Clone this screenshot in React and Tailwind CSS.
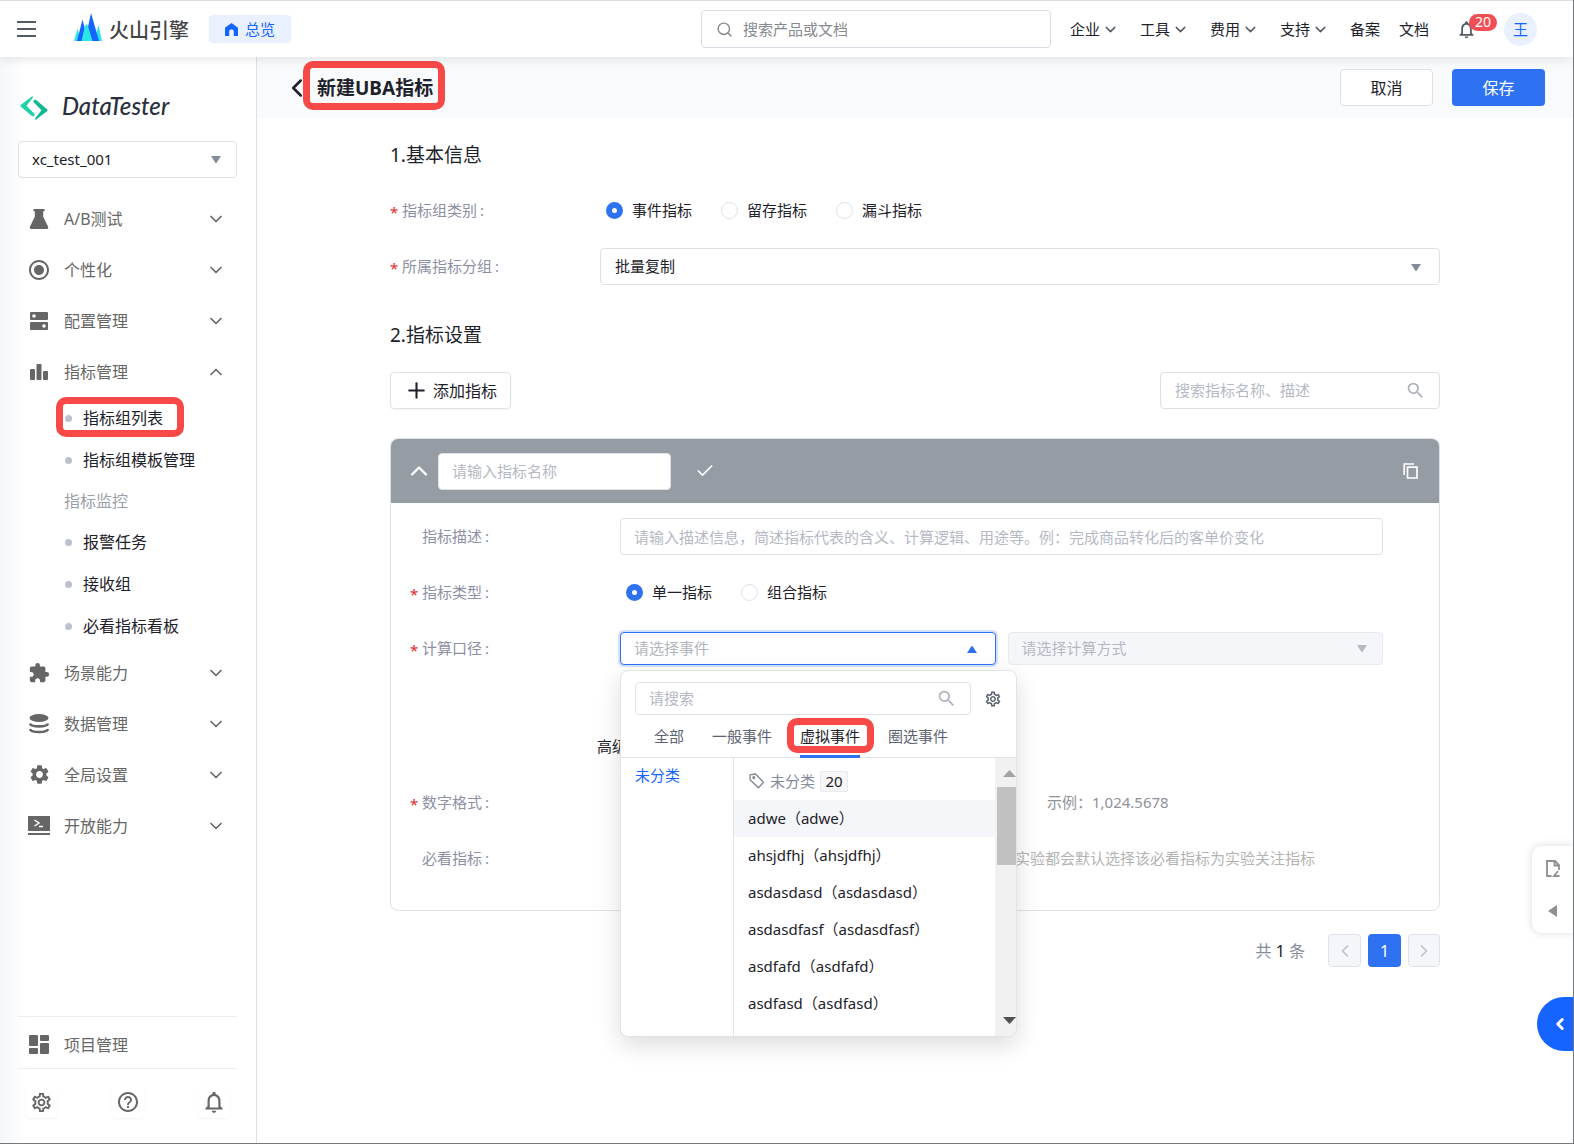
import { useState } from 'react';
import { ChevronDown, ChevronLeft, ChevronRight, ChevronUp, Check, Plus, Search } from 'lucide-react';
import {
  MdRadioButtonChecked,
  MdExtension,
  MdSettings,
  MdOutlineSettings,
  MdHelpOutline,
  MdNotificationsNone,
  MdSearch,
} from 'react-icons/md';

const FlaskIcon = () => (
  <svg width="20" height="20" viewBox="0 0 20 20" fill="currentColor">
    <path d="M4.500 0h11v2.200h-1.300v5.600L19 17.500c.6 1.300 0 2.500-1.300 2.500H2.300C1 20 .4 18.800 1 17.500l4.800-9.700V2.200H4.500z" />
  </svg>
);

const ServerIcon = () => (
  <svg width="18" height="18" viewBox="0 0 18 18">
    <rect width="18" height="8" rx="1" fill="currentColor" />
    <rect y="10" width="18" height="8" rx="1" fill="currentColor" />
    <circle cx="4" cy="4" r="1.800" fill="#fff" />
    <circle cx="14" cy="14" r="1.800" fill="#fff" />
  </svg>
);

const BarsIcon = () => (
  <svg width="18" height="18" viewBox="0 0 18 18" fill="currentColor">
    <rect y="6" width="5" height="11" rx="1" />
    <rect x="6.500" y="1" width="5" height="16" rx="1" />
    <rect x="13" y="8" width="5" height="9" rx="1" />
  </svg>
);

const DatabaseIcon = () => (
  <svg width="20" height="20" viewBox="0 0 20 20">
    <ellipse cx="10" cy="4" rx="9.500" ry="4" fill="currentColor" />
    <path d="M1 9.500c1 3.800 17 3.800 18 0M1 15c1 4 17 4 18 0" fill="none" stroke="currentColor" strokeWidth="2.600" />
  </svg>
);

const TerminalIcon = () => (
  <svg width="22" height="20" viewBox="0 0 22 20">
    <path d="M0 0h22v15H0zM0 17h22v2H0z" fill="currentColor" />
    <path d="M6.500 4l4.500 3-4.500 3M11 10.500h4" fill="none" stroke="#fff" strokeWidth="1.500" />
  </svg>
);

const DashboardIcon = () => (
  <svg width="20" height="20" viewBox="0 0 20 20" fill="currentColor">
    <rect width="9" height="11" rx="1" />
    <rect y="13" width="9" height="6" rx="1" />
    <rect x="11" width="9" height="6" rx="1" />
    <rect x="11" y="8" width="9" height="11" rx="1" />
  </svg>
);

const VolcanoLogo = () => (
  <svg width="28" height="28" viewBox="0 0 28 28">
    <path d="M0 28L3.500 15.500 7 28zM20 28l4.500-16L28 28z" fill="#2be6e6" />
    <path d="M3 28L8.500 6.500 14 28z" fill="#1664ff" />
    <path d="M11 28l6-28 8 28z" fill="#1664ff" />
    <path d="M7.500 28l3.500-15c.6-2 2.400-2 3 0L18.500 28z" fill="#2be6e6" />
  </svg>
);

const TesterLogo = () => (
  <svg width="28" height="24" viewBox="0 0 28 24">
    <path d="M12.500 0L1 8.800c-.8.700-.8 1.300 0 2L11.800 20c1.600 1.300 3.800-1.200 2.300-2.600L6.500 9.800 13 1.500z" fill="#1fd0ab" />
    <path d="M15.500 24L27 15.200c.8-.7.800-1.300 0-2L16.200 4c-1.600-1.300-3.800 1.200-2.300 2.600l7.600 7.600-6.500 8.300z" fill="#10b797" />
  </svg>
);

const HomeIcon = () => (
  <svg width="13" height="13" viewBox="0 0 13 13" fill="#1664ff">
    <path d="M6.500 0L13 4.800V13H8.800V8.500c0-2.600-4.600-2.600-4.600 0V13H0V4.800z" />
  </svg>
);

const CopyIcon = () => (
  <svg width="16" height="16" viewBox="0 0 16 16" fill="none" stroke="currentColor" strokeWidth="1.700">
    <path d="M1.200 12V1H11" />
    <path d="M4.500 4.200h9.500v10.800H4.500z" />
  </svg>
);

const TagIcon = () => (
  <svg width="16" height="16" viewBox="0 0 16 16" fill="none" stroke="#7d8592" strokeWidth="1.300" strokeLinejoin="round">
    <path d="M1 1.800L6.500 1l8 8.300-5 5.500L1.200 7z" />
    <circle cx="4.800" cy="4.600" r=".9" />
  </svg>
);

const Triangle = ({ className }) => (
  <svg width="10" height="7" viewBox="0 0 10 7" fill="currentColor" className={className}>
    <path d="M0 0h10L5.800 6.400a1 1 0 0 1-1.600 0z" />
  </svg>
);

const menuTop = [
  { label: 'A/B测试', icon: <FlaskIcon /> },
  { label: '个性化', icon: <MdRadioButtonChecked size={24} /> },
  { label: '配置管理', icon: <ServerIcon /> },
  { label: '指标管理', icon: <BarsIcon />, open: true },
];

const menuBottom = [
  { label: '场景能力', icon: <MdExtension size={22} /> },
  { label: '数据管理', icon: <DatabaseIcon /> },
  { label: '全局设置', icon: <MdSettings size={23} /> },
  { label: '开放能力', icon: <TerminalIcon /> },
];

const events = ['adwe', 'ahsjdfhj', 'asdasdasd', 'asdasdfasf', 'asdfafd', 'asdfasd'];

const MenuRow = ({ label, icon, open }) => (
  <button className="flex h-[51px] w-full items-center text-[#666]">
    <span className="flex w-[42px] items-center justify-center">{icon}</span>
    <span className="ml-1 flex-1 text-left text-base">{label}</span>
    <span className="mr-[11px]">
      {open ? <ChevronUp size={20} strokeWidth={2} /> : <ChevronDown size={20} strokeWidth={2} />}
    </span>
  </button>
);

const SubItem = ({ label, marked }) => (
  <a href="#" className="relative flex h-[42px] items-center gap-[11px] pl-[47px] text-base text-[#1d2129]">
    <span className="h-[7px] w-[7px] rounded-full bg-[#bcc1d0]" />
    {label}
    {marked && <span className="absolute left-[38px] top-0 h-[40px] w-[128px] rounded-[10px] border-[7px] border-[#f74a48]" />}
  </a>
);

const Sidebar = () => (
  <aside className="flex w-[257px] shrink-0 flex-col border-r border-[#dfe1e8] bg-linear-to-r from-[#f5f7fa] to-white to-10% pl-[18px] pr-[19px]">
    <div className="mt-[37px] flex h-[28px] items-center gap-[14px] pl-[2px]">
      <TesterLogo />
      <span className="pb-1 font-['Lato',sans-serif] text-2xl font-medium italic text-[#2b3040]">DataTester</span>
    </div>
    <div className="relative mt-[19px] text-[#1d2129]">
      <select aria-label="项目" className="h-[37px] w-full appearance-none rounded border border-[#dfe1e8] bg-white px-[13px] text-[15px]">
        <option>xc_test_001</option>
      </select>
      <Triangle className="pointer-events-none absolute right-4 top-[15px] text-[#848b99]" />
    </div>
    <nav className="mt-[15px]">
      {menuTop.map((m) => <MenuRow key={m.label} {...m} />)}
      <SubItem label="指标组列表" marked />
      <SubItem label="指标组模板管理" />
      <p className="flex h-10 items-center pl-[46px] text-base text-[#999fa8]">指标监控</p>
      <SubItem label="报警任务" />
      <SubItem label="接收组" />
      <SubItem label="必看指标看板" />
      {menuBottom.map((m) => <MenuRow key={m.label} {...m} />)}
    </nav>
    <div className="mt-auto">
      <a href="#" className="flex h-[53px] items-center border-y border-[#ebedf0] pt-1 text-base text-[#666]">
        <span className="flex w-[42px] justify-center"><DashboardIcon /></span>
        <span className="ml-1">项目管理</span>
      </a>
      <div className="flex h-[74px] justify-between px-[7px] pt-[17px] text-[#666]">
        <button aria-label="设置" className="flex h-8 w-8 items-center justify-center rounded shadow-xs"><MdOutlineSettings size={23} /></button>
        <button aria-label="帮助" className="flex h-8 w-8 items-center justify-center rounded shadow-xs"><MdHelpOutline size={24} /></button>
        <button aria-label="通知" className="flex h-8 w-8 items-center justify-center rounded shadow-xs"><MdNotificationsNone size={26} /></button>
      </div>
    </div>
  </aside>
);

const Header = () => (
  <header className="relative z-10 flex h-[57px] items-center border-t border-[#dcdddf] bg-white text-[15px] text-[#1d2129] shadow-[0_2px_10px_rgba(0,0,0,0.1)]">
    <button aria-label="菜单" className="ml-[17px] flex w-[19px] flex-col gap-[5px]">
      <span className="h-[2px] bg-[#545a63]" />
      <span className="h-[2px] bg-[#545a63]" />
      <span className="h-[2px] bg-[#545a63]" />
    </button>
    <div className="ml-[38px] flex items-center gap-[7px] pb-1">
      <VolcanoLogo />
      <span className="pt-2 text-[20px] leading-7 font-medium text-[#444]">火山引擎</span>
    </div>
    <a href="#" className="ml-[20px] flex h-7 w-[82px] items-center justify-center gap-[7px] rounded bg-[#e9f0ff] text-[#1664ff]">
      <HomeIcon />
      总览
    </a>
    <div className="flex flex-1 items-center justify-end">
      <label className="flex h-[38px] w-[350px] items-center rounded border border-[#d8dde6] px-[14px] text-[#86898f]">
        <Search size={17} className="shrink-0" />
        <input className="ml-[10px] w-full bg-transparent outline-none placeholder:text-[#86898f]" placeholder="搜索产品或文档" />
      </label>
      <nav className="ml-[19px] flex items-center gap-[21px]">
        {['企业', '工具', '费用', '支持'].map((n) => (
          <button key={n} className="flex items-center gap-[2px]">
            {n}
            <ChevronDown size={17} strokeWidth={2} className="text-[#545a63]" />
          </button>
        ))}
        <div className="flex gap-[19px]">
          <a href="#">备案</a>
          <a href="#">文档</a>
        </div>
      </nav>
      <button aria-label="消息" className="relative ml-[27px] text-[#545a63]">
        <MdNotificationsNone size={21} />
        <span className="absolute -top-[5px] left-[13px] flex h-[17px] w-[28px] items-center justify-center rounded-full bg-[#f24f55] text-sm text-white">20</span>
      </button>
      <span className="ml-[27px] mr-[36px] flex h-[33px] w-[33px] items-center justify-center rounded-full bg-[#e9f0ff] text-[#1664ff]">王</span>
    </div>
  </header>
);

const Row = ({ label, required, htmlFor, children }) => (
  <div className="grid min-h-[37px] grid-cols-[210px_1fr] items-center">
    <label htmlFor={htmlFor} className="flex items-center text-[#8d90a5]">
      <span className="w-3 pt-1 text-[#e02b2b]">{required && '*'}</span>
      {label}
      <span className="ml-[3px]">:</span>
    </label>
    {children}
  </div>
);

const Radios = ({ name, options }) => {
  const [value, setValue] = useState(options[0]);
  return (
    <div className="flex items-center pl-[6px]">
      {options.map((o) => (
        <label key={o} className="flex w-[115px] items-center gap-[9px]">
          <input
            type="radio"
            name={name}
            checked={value === o}
            onChange={() => setValue(o)}
            className="h-[17px] w-[17px] appearance-none rounded-full border border-[#dfe1e8] bg-white checked:border-[6px] checked:border-[#2e72f2]"
          />
          {o}
        </label>
      ))}
    </div>
  );
};

const EventDropdown = () => {
  const [tab, setTab] = useState('虚拟事件');
  return (
    <div className="absolute left-0 top-[38px] z-10 flex h-[367px] w-[397px] flex-col overflow-hidden rounded-lg border border-[#e1e3ea] bg-white shadow-[0_8px_24px_rgba(0,0,0,0.14)]">
      <div className="flex items-center px-[14px] pt-[11px]">
        <label className="flex h-[33px] w-[336px] items-center rounded border border-[#dfe1e8] px-[13px]">
          <input className="min-w-0 flex-1 outline-none placeholder:text-[#b5b9c4]" placeholder="请搜索" />
          <MdSearch size={21} className="text-[#b0b4bd]" />
        </label>
        <button aria-label="事件设置" className="ml-[13px] text-[#5c6370]"><MdOutlineSettings size={18} /></button>
      </div>
      <div className="flex h-[43px] shrink-0 gap-7 border-b border-[#e1e3ea] pl-[33px] text-[#5c6370]">
        {['全部', '一般事件', '虚拟事件', '圈选事件'].map((t) => (
          <button
            key={t}
            onClick={() => setTab(t)}
            className={tab === t ? 'relative -mb-px border-b-[3px] border-[#2e72f2] pt-[2px] text-[#1d2129]' : '-mb-px border-b-[3px] border-transparent pt-[2px]'}
          >
            {t}
            {t === '虚拟事件' && <span className="absolute -left-[13px] top-[3px] h-[35px] w-[87px] rounded-[10px] border-[7px] border-[#f74a48]" />}
          </button>
        ))}
      </div>
      <div className="flex min-h-0 flex-1">
        <div className="w-[113px] border-r border-[#e1e3ea] pl-[14px] pt-[6px] text-[#1664ff]">未分类</div>
        <div className="flex-1">
          <div className="flex h-[42px] items-center gap-[5px] pl-[15px] pt-1 text-[#848b99]">
            <TagIcon />
            未分类
            <span className="flex h-[21px] w-[28px] items-center justify-center rounded-xs border border-[#e8eaee] bg-[#f5f7f9] text-[#1d2129]">20</span>
          </div>
          <ul>
            {events.map((e, i) => (
              <li key={e} className={i === 0 ? 'flex h-[37px] items-center bg-[#f5f6f9] pl-[14px]' : 'flex h-[37px] items-center pl-[14px]'}>
                {e}（{e}）
              </li>
            ))}
          </ul>
        </div>
        <div className="flex w-[21px] flex-col items-end bg-[#f1f1f1]">
          <svg width="13" height="7" viewBox="0 0 13 7" className="mt-3 text-[#a3a3a3]" fill="currentColor"><path d="M0 7h13L6.500 0z" /></svg>
          <div className="mt-[10px] h-[78px] w-[19px] bg-[#c1c1c1]" />
          <svg width="13" height="7" viewBox="0 0 13 7" className="mb-3 mt-auto text-[#505050]" fill="currentColor"><path d="M0 0h13L6.500 7z" /></svg>
        </div>
      </div>
    </div>
  );
};

const MetricCard = () => (
  <section className="mt-[29px] rounded-lg border border-[#dfe1e8]">
    <div className="flex h-[64px] items-center rounded-t-[7px] bg-[#959ca4] pl-[14px] pr-5 text-white">
      <button aria-label="收起"><ChevronUp size={28} strokeWidth={2} /></button>
      <input aria-label="指标名称" className="ml-[5px] h-[37px] w-[233px] rounded border border-[#dfe1e8] bg-white px-[13px] text-[#1d2129] outline-none placeholder:text-[#b5b9c4]" placeholder="请输入指标名称" />
      <button aria-label="确认" className="ml-[24px]"><Check size={20} strokeWidth={2} /></button>
      <button aria-label="复制" className="ml-auto"><CopyIcon /></button>
    </div>
    <div className="flex flex-col gap-[19px] pb-[33px] pl-[19px] pr-[56px] pt-[15px]">
      <Row label="指标描述" htmlFor="desc">
        <input id="desc" className="h-[37px] w-full rounded border border-[#dfe1e8] px-[13px] outline-none placeholder:text-[#b5b9c4]" placeholder="请输入描述信息，简述指标代表的含义、计算逻辑、用途等。例：完成商品转化后的客单价变化" />
      </Row>
      <Row label="指标类型" required>
        <Radios name="type" options={['单一指标', '组合指标']} />
      </Row>
      <Row label="计算口径" required htmlFor="event">
        <div className="grid grid-cols-2 gap-3">
          <div className="relative">
            <select id="event" className="h-[33px] w-full appearance-none rounded border border-[#2e72f2] bg-white px-[13px] text-[#b0b4bd] shadow-[0_0_0_2px_#d3e1fc]">
              <option>请选择事件</option>
            </select>
            <Triangle className="pointer-events-none absolute right-[19px] top-[14px] rotate-180 text-[#2e72f2]" />
            <EventDropdown />
          </div>
          <div className="relative">
            <select aria-label="计算方式" disabled className="h-[33px] w-full appearance-none rounded border border-[#e8eaee] bg-[#f5f6f9] px-[13px] text-[#b5b9c4] opacity-100">
              <option>请选择计算方式</option>
            </select>
            <Triangle className="pointer-events-none absolute right-[16px] top-[13px] text-[#b5b9c4]" />
          </div>
        </div>
      </Row>
      <p className="mt-[42px] h-[37px] pl-[187px] leading-9">高级选项</p>
      <Row label="数字格式" required>
        <span className="pl-[427px] text-[#8f9299]">示例：1,024.5678</span>
      </Row>
      <Row label="必看指标">
        <span className="pl-[395px] whitespace-nowrap text-[#b3b3b3]">实验都会默认选择该必看指标为实验关注指标</span>
      </Row>
    </div>
  </section>
);

const Pagination = () => (
  <div className="mt-[23px] flex h-[33px] items-center justify-end gap-[7px]">
    <span className="mr-4 text-base text-[#848b99]">共 <span className="text-[#1d2129]">1</span> 条</span>
    <button aria-label="上一页" className="flex h-[33px] w-[33px] items-center justify-center rounded border border-[#dfe1e8] bg-[#f5f6f9] text-[#bcc1d0]"><ChevronLeft size={20} /></button>
    <button className="h-[33px] w-[33px] rounded bg-[#2e72f2] text-base text-white">1</button>
    <button aria-label="下一页" className="flex h-[33px] w-8 items-center justify-center rounded border border-[#dfe1e8] bg-[#f5f6f9] text-[#bcc1d0]"><ChevronRight size={20} /></button>
  </div>
);

const App = () => {
  return (
    <div className="relative flex min-h-screen flex-col border-b border-r border-[#77787b] bg-white font-['Noto_Sans','Noto_Sans_CJK_SC',sans-serif]">
      <Header />
      <div className="flex flex-1">
        <Sidebar />
        <main className="min-w-0 flex-1 text-[15px] text-[#1d2129]">
          <div className="flex h-[61px] items-center bg-[#f9fafc] pl-[25px] pr-7">
            <button aria-label="返回"><ChevronLeft size={30} strokeWidth={2} /></button>
            <h1 className="relative ml-[5px] text-[19px] leading-7 font-bold">
              新建UBA指标
              <span className="absolute -left-[14px] -top-[13px] h-[49px] w-[142px] rounded-[10px] border-[7px] border-[#f74a48]" />
            </h1>
            <button className="ml-auto h-[37px] w-[93px] rounded border border-[#dfe1e8] bg-white text-base">取消</button>
            <button className="ml-[19px] h-[37px] w-[93px] rounded bg-[#2e72f2] text-base text-white">保存</button>
          </div>
          <div className="mx-auto w-full max-w-[1050px] pt-[23px]">
            <h2 className="text-[19px] leading-7">1.基本信息</h2>
            <div className="mt-[23px] flex flex-col gap-[19px]">
              <Row label="指标组类别" required>
                <Radios name="group" options={['事件指标', '留存指标', '漏斗指标']} />
              </Row>
              <Row label="所属指标分组" required htmlFor="belong">
                <div className="relative">
                  <select id="belong" className="h-[37px] w-full appearance-none rounded border border-[#dfe1e8] bg-white px-[14px]">
                    <option>批量复制</option>
                  </select>
                  <Triangle className="pointer-events-none absolute right-[19px] top-[16px] text-[#848b99]" />
                </div>
              </Row>
            </div>
            <h2 className="mt-9 text-[19px] leading-7">2.指标设置</h2>
            <div className="mt-[23px] flex justify-between">
              <button className="flex h-[37px] w-[121px] items-center justify-center gap-1 rounded border border-[#dfe1e8] text-base shadow-xs">
                <Plus size={25} strokeWidth={2} />
                添加指标
              </button>
              <label className="flex h-[37px] w-[280px] items-center rounded border border-[#dfe1e8] pl-[14px] pr-[13px]">
                <input className="min-w-0 flex-1 outline-none placeholder:text-[#b5b9c4]" placeholder="搜索指标名称、描述" />
                <MdSearch size={21} className="text-[#b0b4bd]" />
              </label>
            </div>
            <MetricCard />
            <Pagination />
          </div>
        </main>
      </div>

      {/* floating tools on the right edge */}
      <div className="absolute right-0 top-[846px] flex h-[87px] w-[41px] flex-col items-center rounded-l-[10px] bg-white pt-[14px] text-[#8f8f8f] shadow-[0_0_8px_rgba(0,0,0,0.15)]">
        <button aria-label="文档">
          <svg width="14" height="17" viewBox="0 0 14 17" fill="none" stroke="currentColor" strokeWidth="1.800">
            <path d="M5.500 16H1V1h8l4 4v5M8.500 1v4.500H13" />
            <path d="M12 11l-4 5h5.500" />
          </svg>
        </button>
        <button aria-label="展开" className="mt-7">
          <svg width="9" height="12" viewBox="0 0 9 12" fill="currentColor" className="block"><path d="M9 0v12L0 6z" /></svg>
        </button>
      </div>
      <button aria-label="展开助手" className="absolute right-0 top-[997px] flex h-[54px] w-[36px] items-center justify-center rounded-l-full bg-[#1664ff] pl-[10px] text-white">
        <ChevronLeft size={18} strokeWidth={4} />
      </button>
    </div>
  );
};

export default App;
